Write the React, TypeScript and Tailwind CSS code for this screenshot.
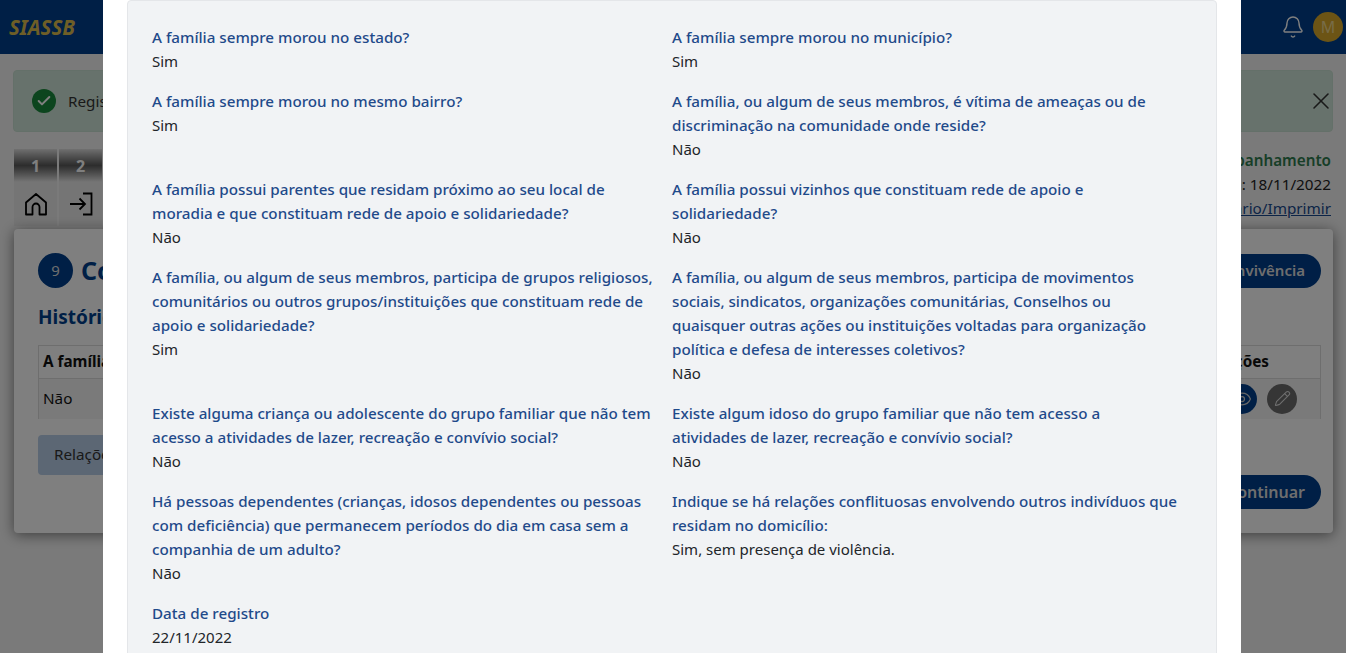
import React from "react";
import { Bell, Check, Eye, Pencil, X } from "lucide-react";

interface Answer {
  label: string;
  value: string;
}

const rows: Answer[][] = [
  [
    { label: "A família sempre morou no estado?", value: "Sim" },
    { label: "A família sempre morou no município?", value: "Sim" },
  ],
  [
    { label: "A família sempre morou no mesmo bairro?", value: "Sim" },
    {
      label: "A família, ou algum de seus membros, é vítima de ameaças ou de discriminação na comunidade onde reside?",
      value: "Não",
    },
  ],
  [
    {
      label: "A família possui parentes que residam próximo ao seu local de moradia e que constituam rede de apoio e solidariedade?",
      value: "Não",
    },
    { label: "A família possui vizinhos que constituam rede de apoio e solidariedade?", value: "Não" },
  ],
  [
    {
      label: "A família, ou algum de seus membros, participa de grupos religiosos, comunitários ou outros grupos/instituições que constituam rede de apoio e solidariedade?",
      value: "Sim",
    },
    {
      label: "A família, ou algum de seus membros, participa de movimentos sociais, sindicatos, organizações comunitárias, Conselhos ou quaisquer outras ações ou instituições voltadas para organização política e defesa de interesses coletivos?",
      value: "Não",
    },
  ],
  [
    {
      label: "Existe alguma criança ou adolescente do grupo familiar que não tem acesso a atividades de lazer, recreação e convívio social?",
      value: "Não",
    },
    {
      label: "Existe algum idoso do grupo familiar que não tem acesso a\natividades de lazer, recreação e convívio social?",
      value: "Não",
    },
  ],
  [
    {
      label: "Há pessoas dependentes (crianças, idosos dependentes ou pessoas com deficiência) que permanecem períodos do dia em casa sem a companhia de um adulto?",
      value: "Não",
    },
    {
      label: "Indique se há relações conflituosas envolvendo outros indivíduos que residam no domicílio:",
      value: "Sim, sem presença de violência.",
    },
  ],
  [{ label: "Data de registro", value: "22/11/2022" }],
];

const HomeIcon = () => (
  <svg width="24" height="24" viewBox="0 0 24 24" fill="none" stroke="black" strokeWidth="1.8" strokeLinejoin="round">
    <path d="M2 10.5 12 2l10 8.5V22.5h-6.5V15a3.5 3.5 0 0 0-7 0v7.5H2z" />
  </svg>
);

const EnterIcon = () => (
  <svg width="26" height="24" viewBox="0 0 26 24" fill="none" stroke="black" strokeWidth="1.8">
    <path d="M15 1.5h8.5v21H15" />
    <path d="M2 12h15M11.5 6.5 17 12l-5.5 5.5" />
  </svg>
);

const Background = () => (
  <div className="flex h-[653px] flex-col overflow-hidden bg-[#f5f5f5]">
    <header className="flex h-[54px] shrink-0 items-center justify-between bg-[#003f8c] pl-[9px] pr-[3px]">
      <span className="text-[20.5px] font-bold italic text-[#dcbc4e]">SIASSB</span>
      <div className="flex items-center gap-[8px]">
        <Bell size={24} strokeWidth={1.4} className="text-white" />
        <span className="flex h-[30px] w-[30px] items-center justify-center rounded-full bg-[#d9a92a] text-[16px] text-[#f0d890]">
          M
        </span>
      </div>
    </header>
    <div className="mx-[13px] mt-4 flex h-[62px] shrink-0 items-center justify-between rounded border border-[#c9e0d2] bg-[#cfe5d8] pl-[18px]">
      <div className="flex items-center gap-3">
        <span className="flex h-6 w-6 items-center justify-center rounded-full bg-[#198a3c]">
          <Check size={16} strokeWidth={3} className="text-white" />
        </span>
        <span className="text-[15.25px] text-[#333]">Registro</span>
      </div>
      <X size={28} strokeWidth={1.3} className="mr-[-3px] text-[#333]" />
    </div>
    <div className="mx-[14px] mt-[17px] flex h-[81px] shrink-0 justify-between">
      <div className="flex gap-[2px]">
        {[HomeIcon, EnterIcon].map((Icon, i) => (
          <div key={i} className="w-[43px]">
            <div className="flex h-[33px] items-center justify-center bg-gradient-to-b from-[#e0e0e0] via-[#5a5a5a] to-[#ececec] text-[16px] font-bold text-white">
              {i + 1}
            </div>
            <div className="flex h-[44px] items-center justify-center bg-[#ebebeb]">
              <Icon />
            </div>
          </div>
        ))}
      </div>
      <div className="-mt-px flex flex-col items-end pr-px text-[15.25px] leading-6 text-[#222]">
        <span className="font-semibold text-[#2f7d4f]">Acompanhamento</span>
        <span>Data: 18/11/2022</span>
        <span className="text-[#1a4a8f] underline">Formulário/Imprimir</span>
      </div>
    </div>
    <section className="ml-[14px] mr-[13px] mt-[-1px] h-[304px] shrink-0 rounded bg-white pl-6 pr-3 pt-6 shadow-[0_2px_14px_rgba(0,0,0,0.5)]">
      <div className="flex h-[35px] items-center justify-between">
        <div className="flex items-center gap-2">
          <span className="flex h-[35px] w-[35px] items-center justify-center rounded-full bg-[#003f8c] text-[15px] text-[#ddd]">
            9
          </span>
          <h1 className="w-[60px] overflow-hidden whitespace-nowrap text-[25px] font-bold text-[#003f8c]">Convivência</h1>
        </div>
        <button className="h-[34px] rounded-full bg-[#003f8c] px-4 text-[15px] font-semibold text-[#ddd]">
          Nova Convivência
        </button>
      </div>
      <h2 className="mt-[15px] text-[19px] font-bold text-[#003f8c]">Histórico</h2>
      <div className="mt-[13px] h-[74px] border border-[#ddd] text-[15.25px] text-[#111]">
        <div className="flex h-[33px] items-center justify-between border-b border-[#ddd] px-1 font-bold">
          <span>A família</span>
          <span className="pr-[47px]">Ações</span>
        </div>
        <div className="flex h-[40px] items-center justify-between bg-[#f5f5f5] px-1">
          <span>Não</span>
          <div className="flex items-center gap-[10px] pr-[19px]">
            <span className="flex h-[30px] w-[30px] items-center justify-center rounded-full bg-[#003f8c]">
              <Eye size={20} strokeWidth={1.5} className="text-[#ccc]" />
            </span>
            <span className="flex h-[30px] w-[30px] items-center justify-center rounded-full bg-[#6c6c6c]">
              <Pencil size={17} strokeWidth={1.5} className="text-[#ddd]" />
            </span>
          </div>
        </div>
      </div>
      <div className="mt-4 flex h-[40px] w-[200px] items-center rounded bg-[#b8cee8] px-4 text-[15.25px] text-[#333]">
        Relações
      </div>
      <div className="flex justify-end">
        <button className="h-[34px] rounded-full bg-[#003f8c] px-4 text-[16px] font-semibold text-[#ddd]">
          Continuar
        </button>
      </div>
    </section>
  </div>
);

export default function App() {
  return (
    <div className="relative h-[653px] overflow-hidden font-['Noto_Sans',sans-serif]">
      <Background />
      <div className="absolute inset-0 flex bg-black/50 pl-[103px]">
        <div className="h-full w-[1138px] overflow-hidden bg-white px-6">
          <div className="rounded-t border border-[#e4e6e9] bg-[#f1f3f5] px-6 pt-6">
            {rows.map((row, i) => (
              <div key={i} className="mb-4 grid grid-cols-2">
                {row.map((item) => (
                  <div key={item.label} className="pr-3 text-[15px] leading-6">
                    <div className="whitespace-pre-line text-[15.2px] font-medium text-[#1f4a8a]">{item.label}</div>
                    <div className="text-[#212529]">{item.value}</div>
                  </div>
                ))}
              </div>
            ))}
          </div>
        </div>
      </div>
    </div>
  );
}
